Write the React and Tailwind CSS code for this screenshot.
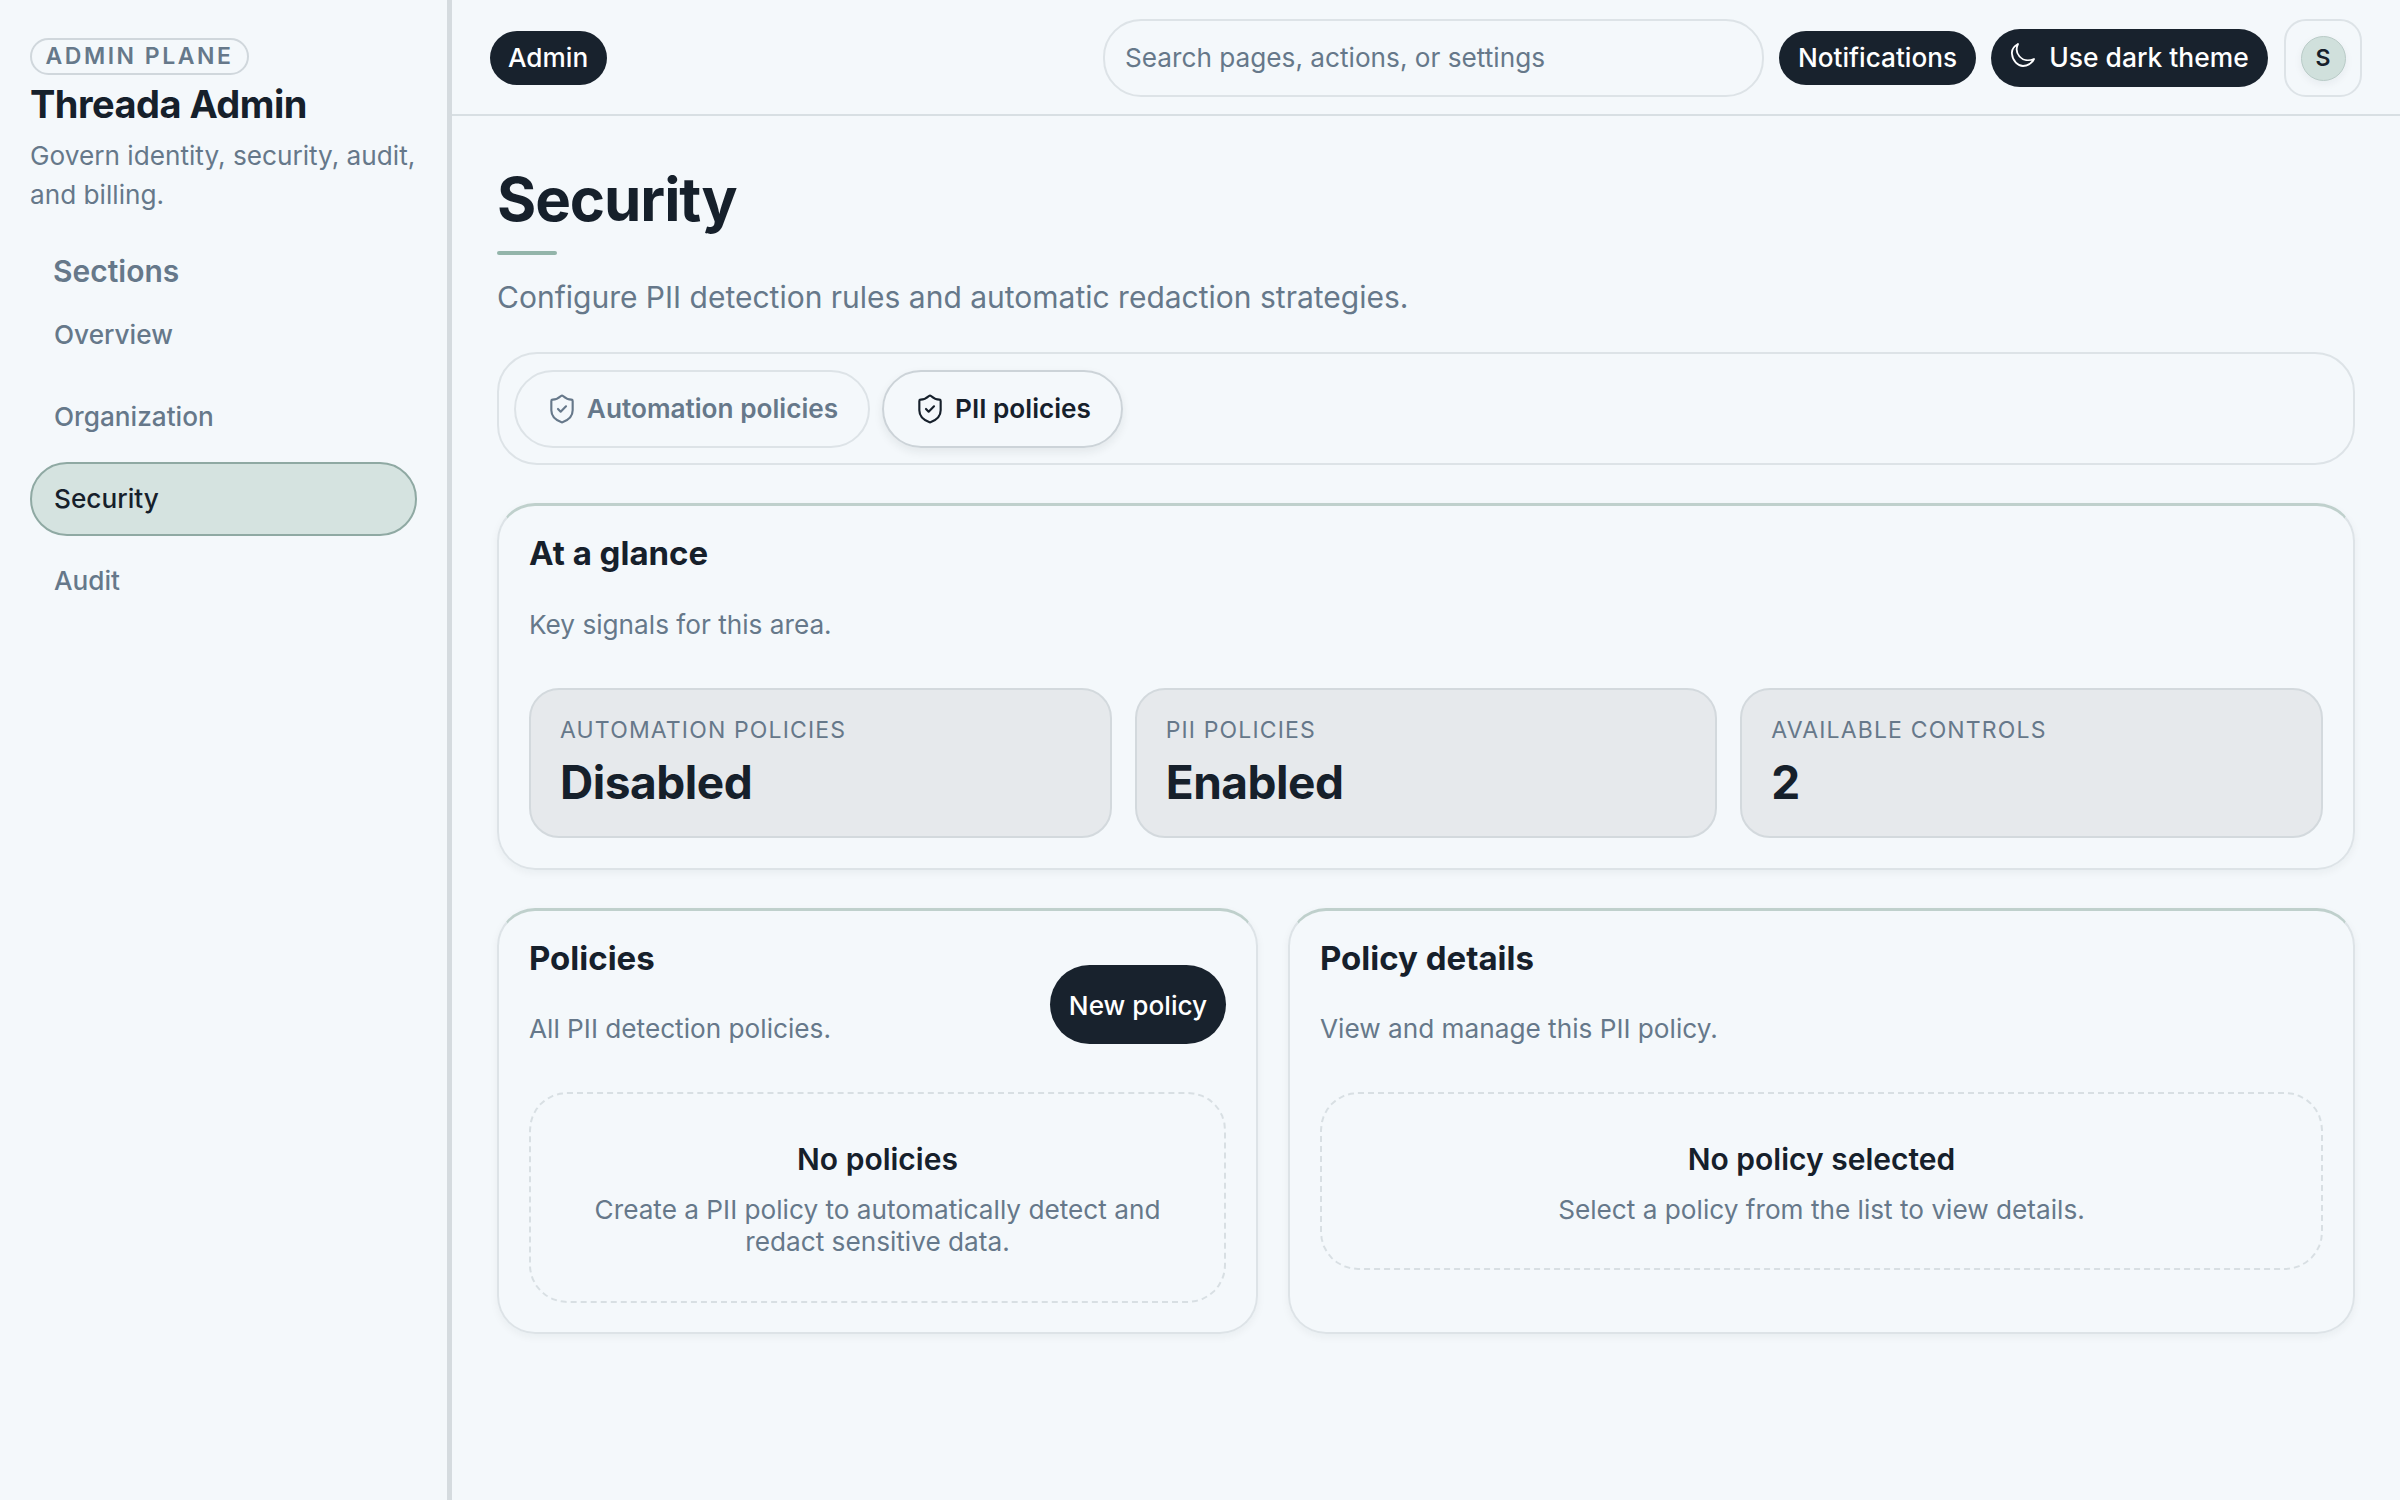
import React from "react";
import { ShieldCheck } from "lucide-react";

const NavItem = ({ label, active }) => (
  <div
    className={
      active
        ? "flex h-[74px] items-center rounded-full border-2 border-[#8fa9a3] bg-[#d5e3e0] px-[22px] text-[26.2px] font-medium text-[#16202b]"
        : "flex h-[74px] items-center rounded-full px-[24px] text-[26.2px] font-medium text-[#66788a]"
    }
  >
    {label}
  </div>
);

const Stat = ({ label, value }) => (
  <div className="h-[150px] rounded-[30px] border-2 border-[#d3d9dd] bg-[#e6e9ec] px-[29px] pt-[24px]">
    <div className="text-[23px] leading-[32px] tracking-[0.05em] text-[#66788a]">{label}</div>
    <div className="mt-[6px] text-[46px] leading-[60px] font-bold tracking-[-0.01em] text-[#16202b]">{value}</div>
  </div>
);

const Empty = ({ title, text, className }) => (
  <div className={"rounded-[38px] border-2 border-dashed border-[#d8dfe3] px-[40px] pt-[45px] text-center " + className}>
    <div className="text-[30px] leading-[40px] font-semibold text-[#16202b]">{title}</div>
    <div className="mt-[15px] text-[26.2px] leading-[32px] text-[#66788a]">{text}</div>
  </div>
);

export default function App() {
  return (
    <div className="flex h-[1500px] bg-[#f4f8fb] font-['Inter',sans-serif]">
      {/* sidebar */}
      <aside className="w-[452px] shrink-0 border-r-[5px] border-[#d5dbdf] px-[30px] pt-[38px]">
        <div className="flex h-[37px] w-[219px] items-center justify-center rounded-full border-2 border-[#d0d7dc] text-[23px] font-semibold tracking-[0.11em] text-[#66788a]">
          ADMIN PLANE
        </div>
        <h1 className="mt-[4px] text-[38px] leading-[50px] font-bold tracking-[-0.014em] text-[#16202b]">Threada Admin</h1>
        <p className="mt-[7px] text-[26.2px] leading-[39px] text-[#66788a]">Govern identity, security, audit, and billing.</p>
        <div className="mt-[35px] pl-[23px] text-[30px] leading-[44px] font-semibold text-[#66788a]">Sections</div>
        <nav className="mt-[5px] flex flex-col gap-[8px]">
          <NavItem label="Overview" />
          <NavItem label="Organization" />
          <NavItem label="Security" active />
          <NavItem label="Audit" />
        </nav>
      </aside>

      <div className="flex-1">
        {/* top bar */}
        <header className="flex h-[116px] items-center border-b-2 border-[#d8dfe3] pt-[2px] pr-[38px] pl-[38px]">
          <div className="flex h-[54px] items-center rounded-full bg-[#18222d] pr-[19px] pl-[18px] text-[26.2px] font-medium text-white">Admin</div>
          <div className="ml-auto flex h-[78px] w-[661px] items-center rounded-[38px] border-2 border-[#dde3e7] px-[20px] text-[26.2px] text-[#66788a]">
            Search pages, actions, or settings
          </div>
          <div className="ml-[15px] flex h-[54px] w-[197px] items-center justify-center rounded-full bg-[#18222d] text-[26.2px] font-medium text-white">Notifications</div>
          <div className="ml-[15px] flex h-[58px] w-[277px] items-center justify-center gap-[13px] rounded-full bg-[#18222d] text-[26.4px] font-medium text-white">
            <svg width="26" height="26" viewBox="0 0 26 26" fill="none" stroke="currentColor" strokeWidth="1.8" strokeLinejoin="round" className="-mt-[6px]">
              <path d="M8 2C3.5 4.5 1.5 8.5 2 12C2.6 19 8 24 13 24C18 24 22 21 24 17C19 19 13 18.5 9.5 14.5C6.5 11 6 6 8 2Z" />
            </svg>
            Use dark theme
          </div>
          <div className="ml-[16px] flex h-[78px] w-[78px] items-center justify-center rounded-[22px] border-2 border-[#dde3e7]">
            <div className="flex h-[45px] w-[45px] items-center justify-center rounded-full border border-[#b9cbc7] bg-[#d0e0dc] text-[23px] font-semibold text-[#16202b] shadow-[0_3px_8px_rgba(22,32,43,0.06)]">S</div>
          </div>
        </header>

        <main className="px-[45px] pt-[45px]">
          <h2 className="text-[60px] leading-[76px] font-bold tracking-[-0.018em] text-[#16202b]">Security</h2>
          <div className="mt-[14px] h-[4px] w-[60px] rounded-full bg-[#93b5aa]" />
          <p className="mt-[22px] text-[30px] leading-[40px] text-[#66788a]">Configure PII detection rules and automatic redaction strategies.</p>

          {/* tabs */}
          <div className="mt-[35px] flex h-[113px] items-center gap-[12px] rounded-[40px] border-2 border-[#dde3e7] pl-[15px]">
            <div className="flex h-[78px] w-[356px] items-center justify-center gap-[9px] rounded-full border-2 border-[#dde3e7] text-[26.2px] font-semibold text-[#66788a]">
              <ShieldCheck size={32} strokeWidth={1.6} />
              Automation policies
            </div>
            <div className="flex h-[78px] w-[241px] items-center justify-center gap-[9px] rounded-full border-2 border-[#ccd3d8] text-[26.2px] font-semibold text-[#16202b] shadow-[0_4px_10px_rgba(22,32,43,0.08)]">
              <ShieldCheck size={32} strokeWidth={1.6} />
              PII policies
            </div>
          </div>

          {/* at a glance */}
          <section className="mt-[38px] h-[367px] rounded-[38px] border-2 border-t-[3px] border-[#dde3e7] border-t-[#bfd0cc] px-[30px] pt-[25px] shadow-[0_3px_8px_rgba(22,32,43,0.05)]">
            <h3 className="text-[33px] leading-[44px] font-bold text-[#16202b]">At a glance</h3>
            <p className="mt-[32px] text-[26.2px] leading-[36px] text-[#66788a]">Key signals for this area.</p>
            <div className="mt-[45px] grid grid-cols-3 gap-[23px]">
              <Stat label="AUTOMATION POLICIES" value="Disabled" />
              <Stat label="PII POLICIES" value="Enabled" />
              <Stat label="AVAILABLE CONTROLS" value="2" />
            </div>
          </section>

          <div className="mt-[38px] grid grid-cols-[761px_1fr] gap-[30px]">
            <section className="h-[426px] rounded-[38px] border-2 border-t-[3px] border-[#dde3e7] border-t-[#bfd0cc] px-[30px] pt-[25px] shadow-[0_3px_8px_rgba(22,32,43,0.05)]">
              <div className="flex justify-between">
                <div>
                  <h3 className="text-[33px] leading-[44px] font-bold text-[#16202b]">Policies</h3>
                  <p className="mt-[31px] text-[26.2px] leading-[36px] text-[#66788a]">All PII detection policies.</p>
                </div>
                <div className="mt-[29px] flex h-[79px] w-[176px] items-center justify-center rounded-full bg-[#18222d] pt-[2px] text-[26.2px] font-medium text-white">New policy</div>
              </div>
              <Empty className="mt-[45px] h-[211px]" title="No policies" text="Create a PII policy to automatically detect and redact sensitive data." />
            </section>
            <section className="h-[426px] rounded-[38px] border-2 border-t-[3px] border-[#dde3e7] border-t-[#bfd0cc] px-[30px] pt-[25px] shadow-[0_3px_8px_rgba(22,32,43,0.05)]">
              <h3 className="text-[33px] leading-[44px] font-bold text-[#16202b]">Policy details</h3>
              <p className="mt-[31px] text-[26.2px] leading-[36px] text-[#66788a]">View and manage this PII policy.</p>
              <Empty className="mt-[45px] h-[178px]" title="No policy selected" text="Select a policy from the list to view details." />
            </section>
          </div>
        </main>
      </div>
    </div>
  );
}
